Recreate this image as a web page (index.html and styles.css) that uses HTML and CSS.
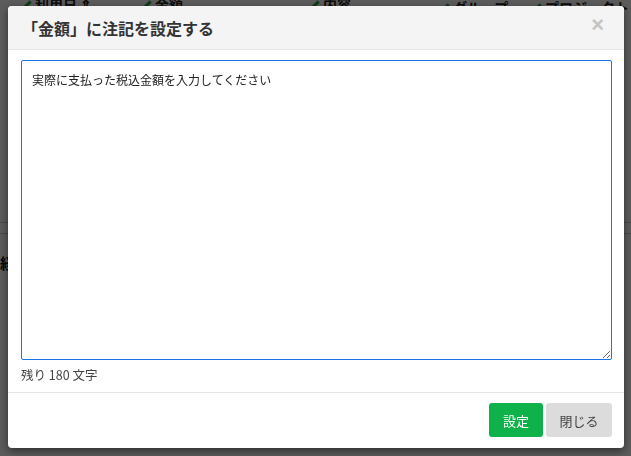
FILE: index.html
```html
<!DOCTYPE html>
<html lang="ja">
<head>
  <meta charset="utf-8">
  <title>注記を設定する</title>
  <link rel="stylesheet" href="styles.css">
</head>
<body>
  <div class="page">
    <div class="list-head">
      <span class="col col-date"><i class="pen"></i>利用日 ⇕</span>
      <span class="col col-amount"><i class="pen"></i>金額</span>
      <span class="col col-memo"><i class="pen"></i>内容</span>
      <span class="col col-group"><i class="pen"></i>グループ</span>
      <span class="col col-project"><i class="pen"></i>プロジェクト</span>
    </div>
    <div class="list-rows">
      <div class="row-line"></div>
      <div class="row-line"></div>
      <div class="row-label">経費</div>
    </div>
  </div>

  <div class="overlay"></div>

  <div class="modal">
    <div class="modal-header">
      <h2 class="modal-title">「金額」に注記を設定する</h2>
      <span class="modal-close">×</span>
    </div>
    <div class="modal-body">
      <textarea class="note-input">実際に支払った税込金額を入力してください</textarea>
      <div class="note-count">残り 180 文字</div>
    </div>
    <div class="modal-footer">
      <button class="btn btn-submit">設定</button>
      <button class="btn btn-close">閉じる</button>
    </div>
  </div>
</body>
</html>
```

FILE: styles.css
```css
html, body {
  margin: 0;
  height: 100%;
}

body {
  font-family: "Noto Sans CJK JP", "Noto Sans", sans-serif;
  color: #333;
  background: #fff;
  overflow: hidden;
}

.page {
  height: 100%;
}

.list-head {
  display: flex;
  height: 14px;
  font-size: 14px;
  font-weight: bold;
  color: #222;
}

.col {
  display: flex;
  align-items: center;
  gap: 6px;
  margin-top: -6px;
}

.col-date { margin-left: 26px; width: 120px; }
.col-amount { width: 168px; }
.col-memo { width: 130px; }
.col-group { width: 92px; margin-top: 0; }
.col-project { margin-top: 0; }

.pen {
  width: 3px;
  height: 9px;
  background: #2aa84a;
  transform: rotate(45deg);
}

.list-rows {
  padding-top: 208px;
}

.row-line {
  height: 10px;
  border-top: 1px solid #ccc;
}

.row-label {
  margin-top: 8px;
  font-size: 15px;
  font-weight: bold;
  color: #111;
}

.overlay {
  position: fixed;
  inset: 0;
  background: rgba(0, 0, 0, 0.64);
}

.modal {
  position: absolute;
  left: 8px;
  top: 6px;
  width: 616px;
  height: 442px;
  display: flex;
  flex-direction: column;
  background: #fff;
  border-radius: 4px;
  box-shadow: 0 3px 8px rgba(0, 0, 0, 0.5);
  overflow: hidden;
}

.modal-header {
  display: flex;
  align-items: center;
  justify-content: space-between;
  height: 43px;
  padding: 0 20px 0 14px;
  background: #f4f4f4;
  border-bottom: 1px solid #e5e5e5;
}

.modal-title {
  margin: 0;
  font-size: 16px;
  font-weight: bold;
  color: #333;
}

.modal-close {
  font-family: "Liberation Sans", sans-serif;
  font-size: 22px;
  font-weight: bold;
  color: #c4c4c4;
  margin-top: -6px;
}

.modal-body {
  padding: 10px 12px 8px 13px;
}

.note-input {
  display: block;
  box-sizing: border-box;
  width: 591px;
  height: 300px;
  padding: 10px 10px;
  font-family: "Noto Sans CJK JP", sans-serif;
  font-size: 12px;
  color: #222;
  border: 1px solid #1a73e8;
  border-radius: 2px;
  outline: none;
  resize: vertical;
}

.note-count {
  margin-top: 5px;
  font-size: 12.5px;
  color: #444;
}

.modal-footer {
  display: flex;
  justify-content: flex-end;
  gap: 3px;
  padding: 10px 12px 11px;
  border-top: 1px solid #e5e5e5;
}

.btn {
  height: 34px;
  padding: 0;
  font-family: "Noto Sans CJK JP", sans-serif;
  font-size: 13px;
  border: none;
  border-radius: 3px;
  cursor: pointer;
}

.btn-submit {
  width: 54px;
  background: #0fb24a;
  color: #fff;
}

.btn-close {
  width: 66px;
  background: #dcdcdc;
  color: #444;
}
```
